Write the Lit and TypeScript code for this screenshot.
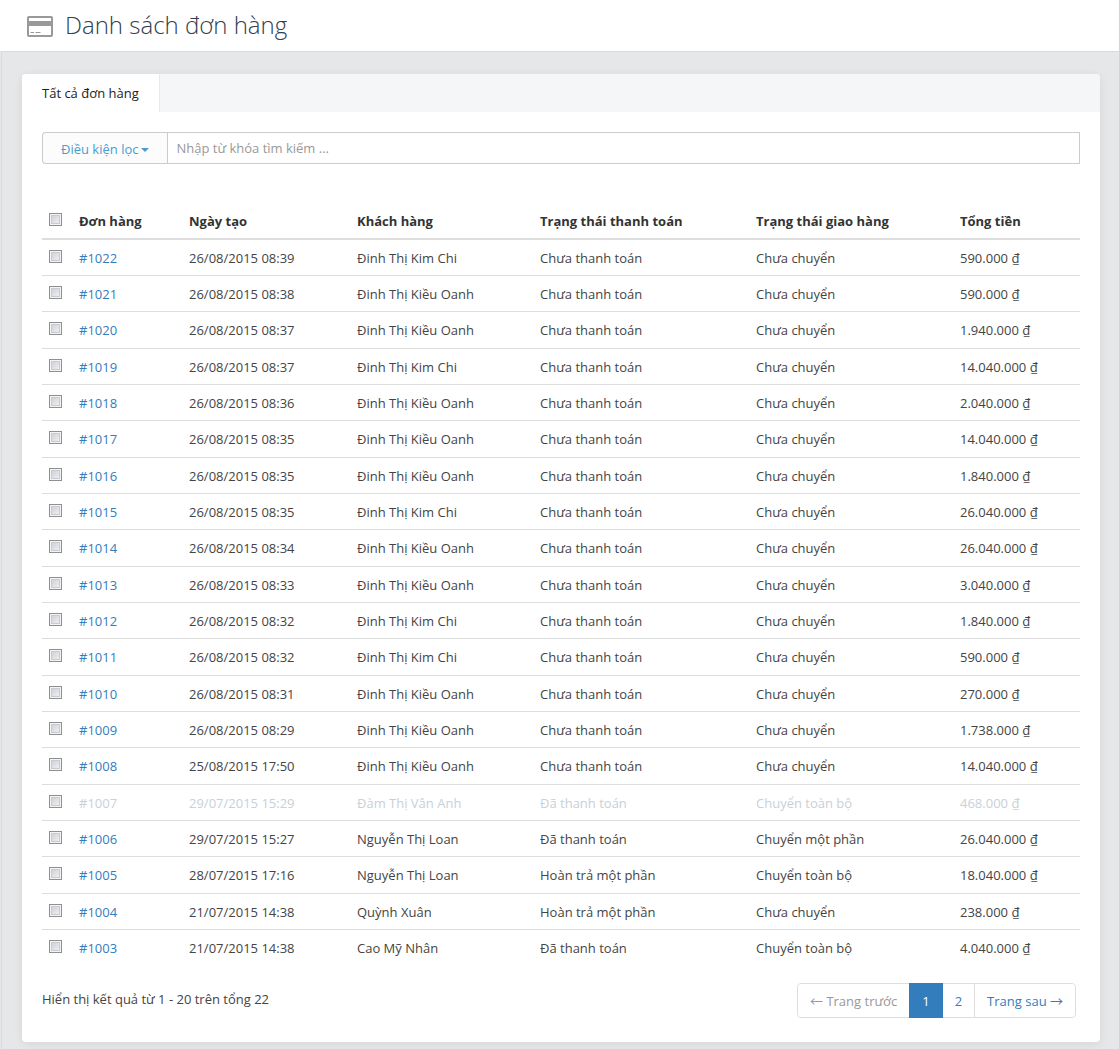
import { LitElement, html, css } from "lit";
import { customElement, state } from "lit/decorators.js";
import { classMap } from "lit/directives/class-map.js";

interface Order {
  id: string;
  created: string;
  customer: string;
  payment: string;
  delivery: string;
  total: string;
  cancelled?: boolean;
}

const CHI = "Đinh Thị Kim Chi";
const OANH = "Đinh Thị Kiều Oanh";
const UNPAID = "Chưa thanh toán";
const PAID = "Đã thanh toán";
const PART_REFUND = "Hoàn trả một phần";
const UNSENT = "Chưa chuyển";
const SENT = "Chuyển toàn bộ";

const order = (
  id: string,
  created: string,
  customer: string,
  total: string,
  payment = UNPAID,
  delivery = UNSENT,
  cancelled = false,
): Order => ({ id, created, customer, total, payment, delivery, cancelled });

const ORDERS: Order[] = [
  order("1022", "26/08/2015 08:39", CHI, "590.000"),
  order("1021", "26/08/2015 08:38", OANH, "590.000"),
  order("1020", "26/08/2015 08:37", OANH, "1.940.000"),
  order("1019", "26/08/2015 08:37", CHI, "14.040.000"),
  order("1018", "26/08/2015 08:36", OANH, "2.040.000"),
  order("1017", "26/08/2015 08:35", OANH, "14.040.000"),
  order("1016", "26/08/2015 08:35", OANH, "1.840.000"),
  order("1015", "26/08/2015 08:35", CHI, "26.040.000"),
  order("1014", "26/08/2015 08:34", OANH, "26.040.000"),
  order("1013", "26/08/2015 08:33", OANH, "3.040.000"),
  order("1012", "26/08/2015 08:32", CHI, "1.840.000"),
  order("1011", "26/08/2015 08:32", CHI, "590.000"),
  order("1010", "26/08/2015 08:31", OANH, "270.000"),
  order("1009", "26/08/2015 08:29", OANH, "1.738.000"),
  order("1008", "25/08/2015 17:50", OANH, "14.040.000"),
  order("1007", "29/07/2015 15:29", "Đàm Thị Vân Anh", "468.000", PAID, SENT, true),
  order("1006", "29/07/2015 15:27", "Nguyễn Thị Loan", "26.040.000", PAID, "Chuyển một phần"),
  order("1005", "28/07/2015 17:16", "Nguyễn Thị Loan", "18.040.000", PART_REFUND, SENT),
  order("1004", "21/07/2015 14:38", "Quỳnh Xuân", "238.000", PART_REFUND, UNSENT),
  order("1003", "21/07/2015 14:38", "Cao Mỹ Nhân", "4.040.000", PAID, SENT),
];

@customElement("order-table")
class OrderTable extends LitElement {
  @state() private selected = new Set<string>();

  static styles = css`
    :host {
      display: block;
    }
    .orders {
      width: 100%;
      table-layout: fixed;
      border-collapse: separate;
      border-spacing: 0;
    }
    .col-check { width: 29px; }
    .col-id { width: 110px; }
    .col-date { width: 168px; }
    .col-customer { width: 183px; }
    .col-payment { width: 216px; }
    .col-delivery { width: 204px; }
    .col-total { width: 128px; }
    .head,
    .cell {
      box-sizing: border-box;
      padding: 0 8px;
      text-align: left;
      vertical-align: middle;
      line-height: 20px;
    }
    .head {
      height: 36px;
      border-bottom: 2px solid #ddd;
      font-weight: 700;
      color: #333;
    }
    .cell {
      height: 36px;
      border-bottom: 1px solid #ddd;
    }
    .row:nth-child(3n) .cell {
      height: 37px;
    }
    .row:last-child .cell {
      border-bottom: 0;
    }
    .check-cell {
      padding: 0 0 3px 7px;
      line-height: 0;
    }
    .check {
      appearance: none;
      box-sizing: border-box;
      width: 13px;
      height: 13px;
      margin: 0;
      border: 1px solid #8e8f8f;
      background: linear-gradient(135deg, #c6cad2, #f6f6f6);
      box-shadow: inset 0 0 0 1px #f4f4f4, inset 0 0 0 2px #c8ccd2;
    }
    .check:checked {
      background: #337dbd;
    }
    .link {
      color: #337dbd;
      text-decoration: none;
    }
    .cancelled .cell,
    .cancelled .link {
      color: #c8d0d8;
    }
  `;

  private toggle(id: string) {
    const next = new Set(this.selected);
    if (!next.delete(id)) next.add(id);
    this.selected = next;
  }

  private toggleAll() {
    this.selected =
      this.selected.size === ORDERS.length ? new Set() : new Set(ORDERS.map((o) => o.id));
  }

  render() {
    return html`
      <table class="orders">
        <colgroup>
          <col class="col-check" />
          <col class="col-id" />
          <col class="col-date" />
          <col class="col-customer" />
          <col class="col-payment" />
          <col class="col-delivery" />
          <col class="col-total" />
        </colgroup>
        <thead>
          <tr>
            <th class="head check-cell">
              <input
                class="check"
                type="checkbox"
                aria-label="Chọn tất cả"
                .checked=${this.selected.size === ORDERS.length}
                @change=${this.toggleAll}
              />
            </th>
            <th class="head">Đơn hàng</th>
            <th class="head">Ngày tạo</th>
            <th class="head">Khách hàng</th>
            <th class="head">Trạng thái thanh toán</th>
            <th class="head">Trạng thái giao hàng</th>
            <th class="head">Tổng tiền</th>
          </tr>
        </thead>
        <tbody>
          ${ORDERS.map(
            (o) => html`
              <tr class=${classMap({ row: true, cancelled: !!o.cancelled })}>
                <td class="cell check-cell">
                  <input
                    class="check"
                    type="checkbox"
                    aria-label="Chọn đơn hàng ${o.id}"
                    .checked=${this.selected.has(o.id)}
                    @change=${() => this.toggle(o.id)}
                  />
                </td>
                <td class="cell"><a class="link" href="#${o.id}">#${o.id}</a></td>
                <td class="cell">${o.created}</td>
                <td class="cell">${o.customer}</td>
                <td class="cell">${o.payment}</td>
                <td class="cell">${o.delivery}</td>
                <td class="cell">${o.total} ₫</td>
              </tr>
            `,
          )}
        </tbody>
      </table>
    `;
  }
}

@customElement("page-nav")
class PageNav extends LitElement {
  static styles = css`
    :host {
      display: block;
    }
    .pages {
      display: flex;
      border: 1px solid #ddd;
      border-radius: 4px;
    }
    .page {
      padding: 7px 12px 6px;
      line-height: 20px;
      color: #337dbd;
      text-decoration: none;
      background: #fff;
    }
    .page:first-child {
      border-radius: 4px 0 0 4px;
    }
    .page:last-child {
      border-left: 1px solid #ddd;
      border-radius: 0 4px 4px 0;
    }
    .disabled {
      color: #999;
    }
    .current {
      margin: -1px 0;
      padding: 8px 13px 7px;
      background: #337dbd;
      color: #fff;
    }
    .arrow {
      font-family: "Noto Sans CJK JP", sans-serif;
      line-height: 1;
    }
  `;

  render() {
    return html`
      <nav class="pages" aria-label="Phân trang">
        <a class="page disabled" href="#prev" aria-disabled="true"><span class="arrow">←</span> Trang trước</a>
        <a class="page current" href="#page-1" aria-current="page">1</a>
        <a class="page" href="#page-2">2</a>
        <a class="page" href="#next">Trang sau <span class="arrow">→</span></a>
      </nav>
    `;
  }
}

@customElement("app-root")
class AppRoot extends LitElement {
  static styles = css`
    :host {
      display: flex;
      flex-direction: column;
      min-height: 100vh;
      background: #e5e7e9;
      font-family: "Open Sans", "Noto Sans", sans-serif;
      font-size: 13px;
      line-height: 20px;
      color: #444;
    }
    .header {
      display: flex;
      align-items: flex-start;
      gap: 12px;
      padding: 9px 27px 10px;
      background: #fff;
    }
    .icon {
      display: block;
      width: 26px;
      height: 21px;
      margin-top: 7px;
    }
    .title {
      margin: 0;
      font-size: 24px;
      font-weight: 300;
      line-height: 32px;
      color: #32404e;
    }
    .main {
      flex: 1;
      padding: 22px 19px 7px 20px;
      border-top: 1px solid #d9dbdd;
      border-left: 1px solid #d9dbdd;
      margin-left: 1px;
    }
    .card {
      border-radius: 4px;
      background: #fff;
      box-shadow: 0 2px 10px rgba(0, 0, 0, 0.08);
    }
    .tabs {
      display: flex;
      border-radius: 4px 4px 0 0;
      background: #f4f6f8;
    }
    .tab {
      padding: 9px 20px;
      border: 0;
      border-right: 1px solid #e7eaec;
      border-radius: 4px 0 0 0;
      background: #fff;
      font: inherit;
      line-height: 20px;
      color: #222;
    }
    .body {
      padding: 20px 20px 24px;
    }
    .search {
      display: flex;
      margin-bottom: 40px;
    }
    .filter {
      display: flex;
      align-items: center;
      gap: 3px;
      padding: 2px 18px 0;
      border: 1px solid #ccc;
      border-right: 0;
      border-radius: 4px 0 0 4px;
      background: #fcfcfc;
      font: inherit;
      color: #479ccf;
    }
    .caret {
      border-top: 4px solid;
      border-left: 4px solid transparent;
      border-right: 4px solid transparent;
      margin-top: 2px;
    }
    .query {
      box-sizing: border-box;
      flex: 1;
      min-width: 0;
      height: 32px;
      padding: 0 8px;
      border: 1px solid #ccc;
      border-radius: 0;
      font: inherit;
      color: #444;
    }
    .query::placeholder {
      color: #999;
      opacity: 1;
    }
    .footer {
      display: flex;
      justify-content: space-between;
      align-items: flex-start;
      margin-top: 17px;
      padding-right: 4px;
    }
    .summary {
      margin: 6px 0 0;
    }
  `;

  render() {
    return html`
      <header class="header">
        <svg class="icon" viewBox="0 0 26 21" aria-hidden="true">
          <rect x="1" y="1" width="24" height="19" rx="1" fill="#fff" stroke="#999" stroke-width="2" />
          <path d="M1 5h24v5H1z" fill="#999" />
          <path d="M3.5 16.5H7M8.5 16.5h5" stroke="#999" />
        </svg>
        <h1 class="title">Danh sách đơn hàng</h1>
      </header>
      <main class="main">
        <section class="card">
          <div class="tabs" role="tablist">
            <button class="tab" role="tab" aria-selected="true">Tất cả đơn hàng</button>
          </div>
          <div class="body">
            <form class="search" role="search">
              <button class="filter" type="button">Điều kiện lọc<span class="caret"></span></button>
              <input
                class="query"
                type="text"
                aria-label="Từ khóa"
                placeholder="Nhập từ khóa tìm kiếm ..."
              />
            </form>
            <order-table></order-table>
            <div class="footer">
              <p class="summary">Hiển thị kết quả từ 1 - 20 trên tổng 22</p>
              <page-nav></page-nav>
            </div>
          </div>
        </section>
      </main>
    `;
  }
}
